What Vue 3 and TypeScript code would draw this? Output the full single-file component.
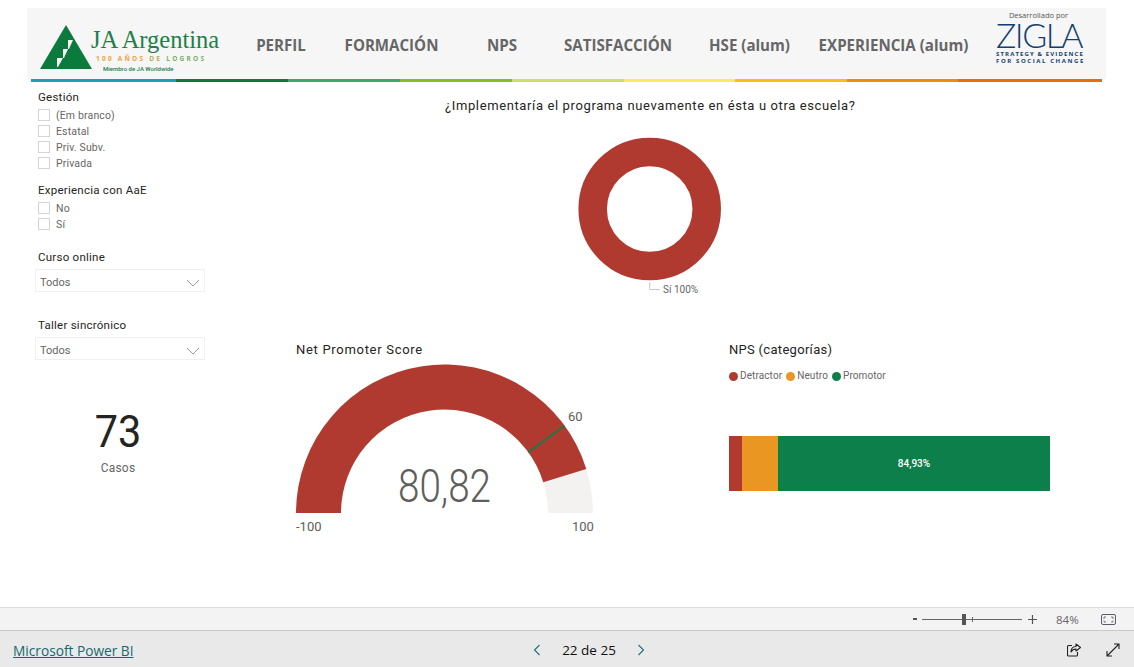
<script setup lang="ts">
const navItems: string[] = ['PERFIL', 'FORMACIÓN', 'NPS', 'SATISFACCIÓN', 'HSE (alum)', 'EXPERIENCIA (alum)']
const stripe: { color: string; width: number }[] = [
  { color: '#1f9fb2', width: 145 },
  { color: '#0b7a3c', width: 112 },
  { color: '#36a96c', width: 112 },
  { color: '#8fbb22', width: 112 },
  { color: '#cfdf62', width: 112 },
  { color: '#f6ec5c', width: 111 },
  { color: '#fbbf0c', width: 112 },
  { color: '#f18b0c', width: 111 },
  { color: '#ec6d08', width: 144 },
]
const gestion: string[] = ['(Em branco)', 'Estatal', 'Priv. Subv.', 'Privada']
const experiencia: string[] = ['No', 'Sí']
const legend: { label: string; color: string }[] = [
  { label: 'Detractor', color: '#b03a2f' },
  { label: 'Neutro', color: '#ea9623' },
  { label: 'Promotor', color: '#0d7f4b' },
]
</script>

<template>
  <div class="page">
    <div class="report">
      <header class="band">
        <div class="logo">
          <svg class="triangle" width="52" height="45" viewBox="0 0 52 45">
            <polygon points="26,0 52,44 0,44" fill="#0b7a3c" />
            <polygon points="28,15 33,15 29,24 28,24" fill="#f4f7f2" />
            <polygon points="23,24 28,24 24,33 23,33" fill="#f4f7f2" />
            <polygon points="17,33 23,33 18,42 17,42" fill="#f4f7f2" />
          </svg>
          <div class="logo-text">
            <div class="ja">JA Argentina</div>
            <div class="anos"><span class="o1">100 AÑOS </span><span class="o2">DE </span><span class="o3">LOGROS</span></div>
            <div class="miembro">Miembro de JA Worldwide</div>
          </div>
        </div>
        <nav class="nav">
          <span v-for="n in navItems" :key="n">{{ n }}</span>
        </nav>
        <div class="zigla">
          <div class="dev">Desarrollado por</div>
          <div class="zname">ZIGLA</div>
          <div class="zsub strategy">STRATEGY &amp; EVIDENCE</div>
          <div class="zsub">FOR SOCIAL CHANGE</div>
        </div>
      </header>
      <div class="stripe">
        <i v-for="s in stripe" :key="s.color" :style="{ width: s.width + 'px', background: s.color }"></i>
      </div>

      <div class="content">
        <aside class="side">
          <div class="s-title">Gestión</div>
          <label v-for="g in gestion" :key="g" class="row"><i class="box"></i>{{ g }}</label>
          <div class="s-title exp">Experiencia con AaE</div>
          <label v-for="g in experiencia" :key="g" class="row"><i class="box"></i>{{ g }}</label>
          <div class="s-title curso">Curso online</div>
          <div class="select">
            <span>Todos</span>
            <svg width="14" height="8" viewBox="0 0 14 8"><path d="M1 1l6 6 6-6" fill="none" stroke="#9a9a9a" stroke-width="1" /></svg>
          </div>
          <div class="s-title taller">Taller sincrónico</div>
          <div class="select">
            <span>Todos</span>
            <svg width="14" height="8" viewBox="0 0 14 8"><path d="M1 1l6 6 6-6" fill="none" stroke="#9a9a9a" stroke-width="1" /></svg>
          </div>
          <div class="card">
            <div class="card-num">73</div>
            <div class="card-label">Casos</div>
          </div>
        </aside>

        <main class="main">
          <h2 class="question">¿Implementaría el programa nuevamente en ésta u otra escuela?</h2>
          <svg class="donut" width="160" height="170" viewBox="0 0 160 170">
            <circle cx="79.7" cy="76" r="57" fill="none" stroke="#b03a2f" stroke-width="28.5" />
            <path d="M79.7 149v7.500h10" fill="none" stroke="#c8c8c8" />
            <text x="93" y="160" class="donut-label">Sí 100%</text>
          </svg>
          <div class="charts">
            <section class="gauge">
              <h3 class="c-title">Net Promoter Score</h3>
              <svg width="310" height="190" viewBox="0 0 310 190">
                <path d="M3 163a148.500 148.500 0 0 1 297 0h-45a103.500 103.500 0 0 0-207 0z" fill="#f3f2f1" />
                <path d="M3 163a148.500 148.500 0 0 1 290.300-44.100l-43 13.360a103.500 103.500 0 0 0-202.300 30.740z" fill="#b03a2f" />
                <line x1="235.200" y1="102.200" x2="271.600" y2="75.700" stroke="#1a7a45" stroke-width="2" />
                <text x="151.500" y="152" class="g-value" textLength="93" lengthAdjust="spacingAndGlyphs">80,82</text>
                <text x="3" y="181" class="g-small">-100</text>
                <text x="279" y="181" class="g-small">100</text>
                <text x="275" y="71" class="g-small">60</text>
              </svg>
            </section>
            <section class="nps">
              <h3 class="c-title cat">NPS (categorías)</h3>
              <div class="legend">
                <span v-for="l in legend" :key="l.label"><i :style="{ background: l.color }"></i>{{ l.label }}</span>
              </div>
              <div class="bar">
                <i class="b1"></i><i class="b2"></i><i class="b3">84,93%</i>
              </div>
            </section>
          </div>
        </main>
      </div>
    </div>

    <div class="zoombar">
      <span class="minus"></span>
      <div class="slider"><i class="thumb"></i><i class="tick"></i></div>
      <svg class="plus" width="9" height="9" viewBox="0 0 9 9"><path d="M4.500 0v9M0 4.500h9" stroke="#555" stroke-width="1.200" /></svg>
      <span class="pct">84%</span>
      <svg class="fit" width="15" height="11" viewBox="0 0 15 11">
        <rect x=".5" y=".5" width="14" height="10" rx="1.500" fill="none" stroke="#5a5a6a" />
        <path d="M3 5V3h2M10 3h2v2M12 6.500V8h-2M5 8H3V6.500" fill="none" stroke="#5a5a6a" stroke-width=".8" />
      </svg>
    </div>

    <footer class="footer">
      <a class="pbi">Microsoft Power BI</a>
      <div class="pager">
        <svg width="8" height="12" viewBox="0 0 8 12"><path d="M6.500 1l-5 5 5 5" fill="none" stroke="#1f6f78" stroke-width="1.100" /></svg>
        <span>22 de 25</span>
        <svg width="8" height="12" viewBox="0 0 8 12"><path d="M1.500 1l5 5-5 5" fill="none" stroke="#1f6f78" stroke-width="1.100" /></svg>
      </div>
      <div class="actions">
        <svg width="14" height="14" viewBox="0 0 14 14">
          <path d="M5 2.500H1.500a1 1 0 0 0-1 1V12a1 1 0 0 0 1 1h8a1 1 0 0 0 1-1V9" fill="none" stroke="#222" stroke-width="1.100" />
          <path d="M9 1l4.500 3.500L9 8V6C6.500 6 5 7 4 9c0-3 1.500-5.500 5-5.500z" fill="none" stroke="#222" stroke-width="1.100" stroke-linejoin="round" />
        </svg>
        <svg width="14" height="14" viewBox="0 0 14 14">
          <path d="M1 13L13 1M8 1h5v5M1 8v5h5" fill="none" stroke="#222" stroke-width="1.100" />
        </svg>
      </div>
    </footer>
  </div>
</template>

<style>
html, body { margin: 0; background: #fff; overflow: hidden; }
</style>

<style scoped>
.page {
  width: 1134px;
  height: 667px;
  display: flex;
  flex-direction: column;
  font-family: Roboto, "Liberation Sans", sans-serif;
  background: #fff;
}
.report { height: 607px; padding-top: 8px; box-sizing: border-box; overflow: hidden; }
.band {
  margin-left: 27px;
  width: 1079px;
  height: 71px;
  background: #f6f6f6;
  display: flex;
  box-sizing: border-box;
}
.logo { width: 210px; display: flex; align-items: flex-start; padding: 17px 0 0 13px; box-sizing: border-box; flex: none; }
.triangle { flex: none; }
.logo-text { margin-left: -1px; width: 130px; }
.ja {
  font: 24.500px/24px "Liberation Serif", serif;
  color: #1d8049;
  margin-top: 3px;
  white-space: nowrap;
}
.anos {
  font: bold 6.500px/8px "Open Sans", sans-serif;
  letter-spacing: 2.250px;
  margin: 3px 0 0 5px;
  white-space: nowrap;
}
.o1 { color: #eda23c; }
.o2 { color: #b7b25a; }
.o3 { color: #7fae6a; }
.miembro { font: 500 6px/7px Roboto, sans-serif; color: #1d8049; margin: 2px 0 0 12px; white-space: nowrap; }
.nav {
  display: grid;
  grid-template-columns: 88px 133px 88px 144px 119px 169px;
  align-items: center;
  height: 71px;
  padding-top: 2px;
  box-sizing: border-box;
  flex: none;
  font: 700 15.100px/20px "Open Sans", sans-serif;
  color: #666;
  text-align: center;
  white-space: nowrap;
}
.zigla { margin-left: 18px; width: 88px; padding-top: 2px; color: #11406f; flex: none; }
.dev { font: 400 7.500px/10px "Open Sans", sans-serif; color: #555; text-align: center; margin-left: -3px; margin-bottom: 1px; }
.zname { font: 300 34px/27px Lato, sans-serif; letter-spacing: -1.500px; white-space: nowrap; margin-bottom: 3px; }
.zsub { font: 700 6px/7px "Open Sans", sans-serif; letter-spacing: 1.600px; white-space: nowrap; }
.strategy { letter-spacing: 1.130px; }
.stripe { margin-left: 31px; display: flex; height: 3px; }
.stripe i { display: block; height: 3px; }
.content { display: flex; }
.side { padding: 7px 0 0 0; margin-left: 35px; flex: none; width: 170px; }
.s-title { font-size: 11.500px; line-height: 16px; color: #252423; margin-left: 3px; letter-spacing: .25px; white-space: nowrap; }
.exp { margin-top: 11px; }
.curso { margin-top: 17px; margin-bottom: 4px; }
.taller { margin-top: 25px; margin-bottom: 4px; }
.row { display: flex; align-items: center; height: 16px; margin-left: 3px; font-size: 10.500px; color: #666; letter-spacing: .15px; }
.s-title + .row { margin-top: 2px; }
.box { width: 10px; height: 10px; border: 1px solid #d4d4d4; margin-right: 6px; display: block; background: #fff; flex: none; }
.select {
  width: 170px;
  height: 23px;
  box-sizing: border-box;
  border: 1px solid #f0f0f0;
  display: flex;
  align-items: center;
  justify-content: space-between;
  padding: 4px 4px 0 4px;
  font-size: 11px;
  color: #666;
}
.card { width: 166px; text-align: center; margin-top: 46px; }
.card-num { font-size: 45px; line-height: 52px; color: #252423; transform: scaleX(.92); }
.card-label { font-size: 12px; line-height: 18px; color: #666; margin-top: 1px; letter-spacing: .2px; }
.main { flex: 1; }
.question {
  margin: 15px 0 0 0;
  font-size: 13px;
  line-height: 18px;
  font-weight: 400;
  color: #252423;
  text-indent: 240px;
  letter-spacing: .62px;
  white-space: nowrap;
}
.donut { display: block; margin: 18px 0 0 365px; overflow: visible; }
.donut-label { font: 10px Roboto, sans-serif; fill: #666; }
.charts { display: flex; margin-top: 38px; }
.gauge { width: 433px; margin-left: 91px; flex: none; }
.gauge svg { display: block; margin: -9px 0 0 -3px; overflow: visible; }
.c-title { margin: 0; font-size: 13px; line-height: 18px; font-weight: 400; color: #252423; letter-spacing: .7px; white-space: nowrap; }
.cat { letter-spacing: .3px; }
.g-value { font: 300 46px Roboto, sans-serif; fill: #605e5c; text-anchor: middle; }
.g-small { font: 400 13px Roboto, sans-serif; fill: #605e5c; }
.nps { width: 321px; }
.legend { display: flex; gap: 4px; margin-top: 11px; font-size: 10px; line-height: 12px; color: #666; letter-spacing: .1px; white-space: nowrap; }
.legend span { display: flex; align-items: center; }
.legend i { width: 9px; height: 9px; border-radius: 50%; margin-right: 2px; display: block; }
.bar { display: flex; height: 55px; margin-top: 54px; width: 321px; }
.bar i { display: block; height: 55px; font-style: normal; }
.b1 { width: 13px; background: #b03a2f; }
.b2 { width: 36px; background: #ea9623; }
.b3 { flex: 1; background: #0d7f4b; color: #fff; font-size: 10px; font-weight: 500; line-height: 55px; text-align: center; }
.zoombar {
  height: 23px;
  box-sizing: border-box;
  background: #f3f3f3;
  border-top: 1px solid #dedede;
  display: flex;
  align-items: center;
  padding-left: 913px;
  flex: none;
}
.minus { width: 4px; height: 2px; background: #555; display: block; flex: none; }
.slider { position: relative; width: 100px; height: 1px; background: #666; margin-left: 5px; flex: none; }
.thumb { position: absolute; left: 40px; top: -5px; width: 4px; height: 11px; background: #555; display: block; }
.tick { position: absolute; left: 50px; top: -2px; width: 1px; height: 5px; background: #666; display: block; }
.plus { margin-left: 6px; flex: none; }
.pct { margin-left: 19px; font: 400 11.500px "Open Sans", sans-serif; color: #666; width: 26px; flex: none; }
.fit { margin-left: 19px; flex: none; }
.footer {
  flex: 1;
  background: #e9e9e9;
  border-top: 1px solid #c9c9c9;
  box-sizing: border-box;
  padding-top: 2px;
  display: grid;
  grid-template-columns: 533px 112px 1fr;
  align-items: center;
}
.pbi { font: 400 13.700px/18px "Open Sans", sans-serif; color: #14696e; text-decoration: underline; margin: 2px 0 0 13px; white-space: nowrap; }
.pager { display: flex; align-items: center; justify-content: space-between; font: 500 13.500px/18px "Open Sans", sans-serif; color: #111; white-space: nowrap; }
.actions { display: flex; gap: 25px; justify-content: flex-end; padding-right: 14px; }
</style>
